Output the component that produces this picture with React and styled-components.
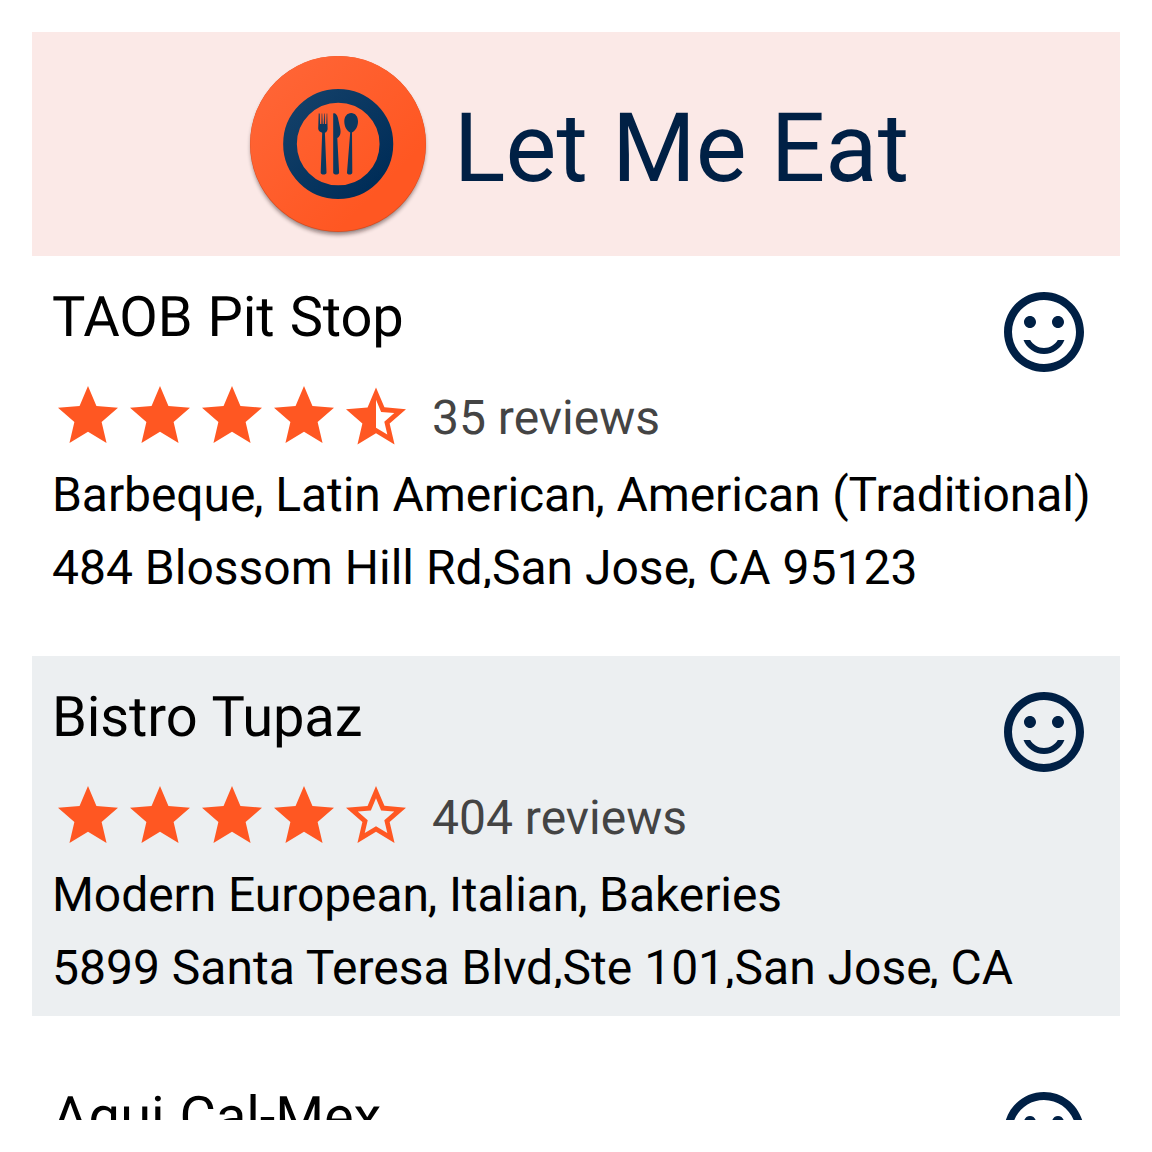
import React from "react";
import styled, { createGlobalStyle } from "styled-components";

const GlobalStyle = createGlobalStyle`
  body {
    margin: 0;
    background: #ffffff;
    font-family: Roboto, "Liberation Sans", sans-serif;
    color: #000000;
    text-rendering: geometricPrecision;
  }
`;

const Screen = styled.main`
  box-sizing: border-box;
  width: 1152px;
  height: 1152px;
  padding: 32px;
  overflow: hidden;
`;

const Viewport = styled.div`
  height: 1088px;
  overflow: hidden;
`;

const Header = styled.header`
  display: flex;
  align-items: center;
  justify-content: center;
  gap: 20px;
  box-sizing: border-box;
  height: 224px;
  padding-right: 1px;
  background: #fbe9e7;
`;

const Logo = styled.svg`
  flex: none;
  width: 192px;
  height: 192px;
`;

const Title = styled.h1`
  margin: 0;
  padding-top: 10px;
  font-size: 96px;
  line-height: 112px;
  font-weight: 400;
  letter-spacing: 0.08px;
  color: #002045;
  white-space: nowrap;
`;

const List = styled.div`
  display: flex;
  flex-direction: column;
  gap: 40px;
`;

const Row = styled.article`
  display: flex;
  flex: none;
  justify-content: space-between;
  box-sizing: border-box;
  height: 360px;
  padding: 28px 28px 0 20px;
  background: ${(p) => (p.$shaded ? "#eceff1" : "transparent")};
`;

const Details = styled.div`
  min-width: 0;
`;

const Name = styled.h2`
  margin: 0;
  height: 96px;
  font-size: 56px;
  line-height: 66px;
  font-weight: 400;
  letter-spacing: -0.1px;
  word-spacing: 1.3px;
  white-space: nowrap;
`;

const Rating = styled.div`
  display: flex;
  align-items: center;
  height: 72px;
`;

const Star = styled.svg`
  flex: none;
  width: 72px;
  height: 72px;
  fill: #ff5722;
`;

const Reviews = styled.span`
  margin-left: 20px;
  padding-top: 4px;
  font-size: 48px;
  line-height: 56px;
  color: #444444;
  white-space: nowrap;
`;

const Line = styled.p`
  margin: ${(p) => p.$top}px 0 0;
  height: ${(p) => p.$height}px;
  width: 1060px;
  overflow: hidden;
  font-size: 48px;
  line-height: 56px;
  letter-spacing: ${(p) => p.$tracking || 0}px;
  white-space: nowrap;
`;

const Kern = styled.span`
  letter-spacing: ${(p) => p.$by}px;
`;

const Face = styled.svg`
  flex: none;
  width: 96px;
  height: 96px;
  margin-left: -400px;
  fill: #002045;
`;

const STAR_PATHS = {
  full: "M12 17.27L18.18 21l-1.64-7.03L22 9.24l-7.19-.61L12 2 9.19 8.63 2 9.24l5.46 4.73L5.82 21z",
  half: "M22 9.74l-7.19-.62L12 2.5 9.19 9.13 2 9.74l5.46 4.73-1.64 7.03L12 17.77l6.18 3.73-1.63-7.03L22 9.74zM12 15.9V6.6l1.71 4.04 4.38.38-3.32 2.88 1 4.28L12 15.9z",
  empty:
    "M22 9.24l-7.19-.62L12 2 9.19 8.63 2 9.24l5.46 4.73L5.82 21 12 17.27 18.18 21l-1.63-7.03L22 9.24zM12 15.4l-3.76 2.27 1-4.28-3.32-2.88 4.38-.38L12 6.1l1.71 4.04 4.38.38-3.32 2.88 1 4.28L12 15.4z",
};

const FACE_PATH =
  "M11.99 2C6.47 2 2 6.48 2 12s4.47 10 9.99 10C17.52 22 22 17.52 22 12S17.52 2 11.99 2zM12 20c-4.42 0-8-3.58-8-8s3.58-8 8-8 8 3.58 8 8-3.58 8-8 8zM15.5 11c.83 0 1.5-.67 1.5-1.5S16.33 8 15.5 8 14 8.67 14 9.5s.67 1.5 1.5 1.5zM8.5 11c.83 0 1.5-.67 1.5-1.5S9.33 8 8.5 8 7 8.67 7 9.5 7.67 11 8.5 11zM12 17.5c2.33 0 4.31-1.46 5.11-3.5h-1.67c-.69 1.19-1.97 2-3.44 2s-2.75-.81-3.45-2H6.88c.8 2.04 2.79 3.5 5.12 3.5z";

const restaurants = [
  {
    name: "TAOB Pit Stop",
    stars: 4.5,
    reviews: 35,
    categories: "Barbeque, Latin American, American (Traditional)",
    address: "484 Blossom Hill Rd,San Jose, CA 95123",
  },
  {
    name: "Bistro Tupaz",
    stars: 4,
    reviews: 404,
    categories: "Modern European, Italian, Bakeries",
    address: "5899 Santa Teresa Blvd,Ste 101,San Jose, CA",
  },
  { name: "Aqui Cal-Mex" },
];

function starKind(stars, index) {
  if (stars >= index + 1) return "full";
  return stars > index ? "half" : "empty";
}

/* Pulls each comma that ends a phrase closer to the letter before it. */
function KernedText({ text, by }) {
  const parts = text.split(", ");
  return parts.map((part, i) =>
    i === parts.length - 1 ? (
      part
    ) : (
      <React.Fragment key={i}>
        {part.slice(0, -1)}
        <Kern $by={by}>{part.slice(-1)}</Kern>
        {", "}
      </React.Fragment>
    )
  );
}

function AppLogo() {
  return (
    <Logo viewBox="0 0 192 192">
      <defs>
        <linearGradient id="disc" x1="0.1" y1="0.1" x2="0.75" y2="0.75">
          <stop offset="0" stopColor="#ff6536" />
          <stop offset="1" stopColor="#ff5722" />
        </linearGradient>
        <linearGradient id="plate" x1="0.1" y1="0.1" x2="0.9" y2="0.9">
          <stop offset="0" stopColor="#123f68" />
          <stop offset="1" stopColor="#002d58" />
        </linearGradient>
        <filter id="shade" x="-10%" y="-10%" width="120%" height="120%">
          <feGaussianBlur stdDeviation="2" />
        </filter>
      </defs>
      <circle cx="96" cy="99.4" r="87" fill="#201010" opacity="0.5" filter="url(#shade)" />
      <circle cx="96" cy="96" r="88" fill="#d94a1d" />
      <circle cx="96" cy="95.6" r="87.7" fill="url(#disc)" />
      <circle cx="96.2" cy="96" r="48.2" fill="none" stroke="url(#plate)" strokeWidth="13.7" />
      <g fill="#0c3960">
        <path d="M77.200 65.500H77.700L78.100 76H79.400L79.700 65.500H80.200L80.700 76H81.700L82.200 65.500H82.700L83 76H84.300L84.700 65.500H85.200L85.600 80.500C85.700 82.800 84.400 84.200 82.900 84.700L84.500 124.500C84.600 127.200 78.600 127.200 78.700 124.500L80.200 84.700C78 84 76.200 82.700 76.200 80.500L76.700 65.500Z" />
        <path d="M91.200 65.500C92.800 64.500 95 66.200 95.800 69.500L98 79.500C99 83.500 99 88 95.300 90L97.100 124.500C97.200 127.200 91.200 127.200 91.200 124.500Z" />
        <path d="M109.200 65C113.200 65 116 68.500 116 73.500C116 78.500 113.500 82.800 110 84.500L110.300 124.500C110.300 127.200 104.800 127.200 105 124.500L108.200 84.500C104.700 82.800 102.300 78.500 102.300 73.500C102.300 68.500 105.200 65 109.200 65Z" />
      </g>
    </Logo>
  );
}

function Restaurant({ item, shaded }) {
  return (
    <Row $shaded={shaded}>
      <Details>
        <Name>{item.name}</Name>
        {item.address && (
          <>
            <Rating>
              {[0, 1, 2, 3, 4].map((i) => (
                <Star key={i} viewBox="0 0 24 24">
                  <path d={STAR_PATHS[starKind(item.stars, i)]} />
                </Star>
              ))}
              <Reviews>{item.reviews} reviews</Reviews>
            </Rating>
            <Line $top={15} $height={60} $tracking={-0.07}>
              <KernedText text={item.categories} by={-1.4} />
            </Line>
            <Line $top={13} $height={48}>
              <KernedText text={item.address} by={-2.4} />
            </Line>
          </>
        )}
      </Details>
      <Face viewBox="0 0 24 24">
        <path d={FACE_PATH} />
      </Face>
    </Row>
  );
}

export default function App() {
  return (
    <>
      <GlobalStyle />
      <Screen>
        <Viewport>
          <Header>
            <AppLogo />
            <Title>Let Me Eat</Title>
          </Header>
          <List>
            {restaurants.map((item, i) => (
              <Restaurant key={item.name} item={item} shaded={i % 2 === 1} />
            ))}
          </List>
        </Viewport>
      </Screen>
    </>
  );
}
